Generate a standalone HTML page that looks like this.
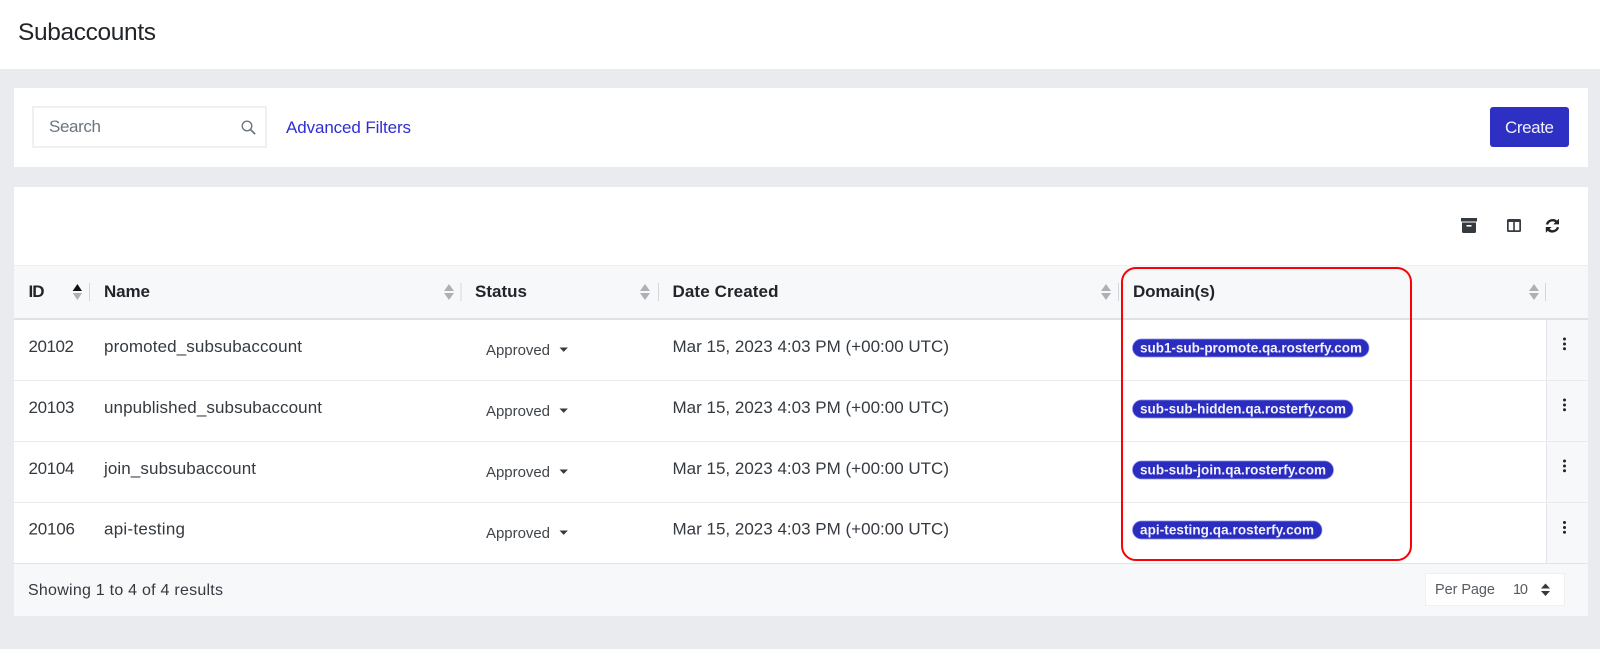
<!DOCTYPE html>
<html lang="en">
<head>
<meta charset="utf-8">
<title>Subaccounts</title>
<style>
html,body{margin:0;padding:0;background:#e9ebef;width:1600px;height:649px;overflow:hidden}
svg{display:block;filter:blur(.3px)}
text{font-family:"Liberation Sans",sans-serif;fill:#343a40;font-size:17px}
.h{font-weight:700;fill:#212529;font-size:17px}
.s{font-size:15px;fill:#3f454b}
.p{font-weight:700;font-size:13.5px;fill:#f2f2fc}
</style>
</head>
<body>
<svg width="1600" height="649" viewBox="0 0 1600 649" xmlns="http://www.w3.org/2000/svg">
<defs>
<g id="sort"><path d="M0 7L5 0L10 7Z M0 9L5 16L10 9Z" fill="#adb1b6"/></g>
<g id="dots" fill="#212529"><circle cx="0" cy="0" r="1.5"/><circle cx="0" cy="5" r="1.5"/><circle cx="0" cy="9.7" r="1.5"/></g>
<path id="caret" d="M0 0H8.4L4.2 4.4Z" fill="#343a40"/>
</defs>
<rect width="1600" height="649" fill="#e9ebef"/>
<!-- header -->
<rect width="1600" height="69" fill="#fff"/>
<text x="18" y="40" style="font-size:24.5px;fill:#212529" textLength="138">Subaccounts</text>
<!-- filter card -->
<rect x="14" y="88" width="1574" height="79" fill="#fff"/>
<rect x="33" y="107" width="233" height="40" fill="#fff" stroke="#eef0f2" stroke-width="2"/>
<text x="49" y="132" style="font-size:17px;fill:#6c757d" textLength="52">Search</text>
<circle cx="247" cy="126" r="4.8" fill="none" stroke="#6c757d" stroke-width="1.4"/>
<path d="M250.6 129.6L254.6 133.6" stroke="#6c757d" stroke-width="1.7" stroke-linecap="round"/>
<text x="286" y="133" style="font-size:17px;fill:#2e2ed2" textLength="125">Advanced Filters</text>
<rect x="1490" y="107" width="79" height="40" rx="3" fill="#2e30c4"/>
<text x="1505" y="133" style="font-size:17px;fill:#f0f0fb" textLength="49">Create</text>
<!-- table card -->
<rect x="14" y="187" width="1574" height="429" fill="#fff"/>
<!-- toolbar icons -->
<path d="M1461 218H1477V221.5H1461Z M1462 222.5H1476V231.5Q1476 233 1474.5 233H1463.5Q1462 233 1462 231.5Z" fill="#343a40"/>
<rect x="1466.5" y="225" width="5" height="1.6" fill="#fff"/>
<path fill-rule="evenodd" d="M1508.5 219H1519.5Q1521 219 1521 220.5V230.5Q1521 232 1519.5 232H1508.5Q1507 232 1507 230.5V220.5Q1507 219 1508.5 219ZM1508.7 222V230.3H1513.2V222ZM1514.8 222V230.3H1519.3V222Z" fill="#343a40"/>
<g fill="none" stroke="#212529" stroke-width="2.4">
<path d="M1547 224.5A5.8 5.8 0 0 1 1556.8 222"/>
<path d="M1558 227.2A5.8 5.8 0 0 1 1548.2 229.5"/>
</g>
<path d="M1559 218.6V224.4H1553.2Z M1545.8 232.8V227H1551.6Z" fill="#212529"/>
<!-- table header -->
<rect x="14" y="265" width="1574" height="54" fill="#f7f8fa"/>
<rect x="14" y="265" width="1574" height="1" fill="#eceef0"/>
<rect x="14" y="318" width="1574" height="2" fill="#dee2e6"/>
<text class="h" x="28.5" y="297" textLength="16">ID</text>
<path d="M72.7 291L77.4 284L82 291Z" fill="#111"/>
<path d="M72.7 293L77.4 300L82 293Z" fill="#adb1b6"/>
<rect x="89" y="283" width="1" height="18" fill="#d5d8db"/>
<text class="h" x="104" y="297" textLength="46">Name</text>
<use href="#sort" x="444" y="284"/>
<rect x="460.5" y="283" width="1" height="18" fill="#d5d8db"/>
<text class="h" x="475" y="297" textLength="52">Status</text>
<use href="#sort" x="640" y="284"/>
<rect x="658" y="283" width="1" height="18" fill="#d5d8db"/>
<text class="h" x="672.5" y="297" textLength="106">Date Created</text>
<use href="#sort" x="1101" y="284"/>
<rect x="1118" y="283" width="1" height="18" fill="#d5d8db"/>
<text class="h" x="1133" y="297" textLength="82">Domain(s)</text>
<use href="#sort" x="1529" y="284"/>
<rect x="1545" y="283" width="1" height="18" fill="#d5d8db"/>
<!-- action column -->
<rect x="1546.5" y="320" width="41.5" height="243" fill="#f7f8fa"/>
<rect x="1546" y="320" width="1" height="243" fill="#e3e5e8"/>
<!-- row lines -->
<rect x="14" y="380" width="1574" height="1" fill="#e9ebee"/>
<rect x="14" y="441" width="1574" height="1" fill="#e9ebee"/>
<rect x="14" y="502" width="1574" height="1" fill="#e9ebee"/>
<rect x="14" y="563" width="1574" height="1" fill="#e1e3e6"/>
<!-- row 1 -->
<text x="28.5" y="352" textLength="45.5">20102</text>
<text x="104" y="352" textLength="198">promoted_subsubaccount</text>
<text class="s" x="486" y="355" textLength="64">Approved</text>
<use href="#caret" x="559.5" y="347.5"/>
<text x="672.5" y="352" textLength="276.5">Mar 15, 2023 4:03 PM (+00:00 UTC)</text>
<rect x="1132.5" y="339" width="236.5" height="18" rx="9" fill="#2b2cc0" stroke="#8d8ee0" stroke-width=".7"/>
<text class="p" x="1140" y="352.5" textLength="222">sub1-sub-promote.qa.rosterfy.com</text>
<use href="#dots" x="1564.5" y="339"/>
<!-- row 2 -->
<text x="28.5" y="413" textLength="46">20103</text>
<text x="104" y="413" textLength="218">unpublished_subsubaccount</text>
<text class="s" x="486" y="416" textLength="64">Approved</text>
<use href="#caret" x="559.5" y="408.5"/>
<text x="672.5" y="413" textLength="276.5">Mar 15, 2023 4:03 PM (+00:00 UTC)</text>
<rect x="1132.5" y="400" width="220.5" height="18" rx="9" fill="#2b2cc0" stroke="#8d8ee0" stroke-width=".7"/>
<text class="p" x="1140" y="413.5" textLength="206">sub-sub-hidden.qa.rosterfy.com</text>
<use href="#dots" x="1564.5" y="400"/>
<!-- row 3 -->
<text x="28.5" y="474" textLength="46">20104</text>
<text x="104" y="474" textLength="152">join_subsubaccount</text>
<text class="s" x="486" y="477" textLength="64">Approved</text>
<use href="#caret" x="559.5" y="469.5"/>
<text x="672.5" y="474" textLength="276.5">Mar 15, 2023 4:03 PM (+00:00 UTC)</text>
<rect x="1132.5" y="461" width="201" height="18" rx="9" fill="#2b2cc0" stroke="#8d8ee0" stroke-width=".7"/>
<text class="p" x="1140" y="474.5" textLength="186">sub-sub-join.qa.rosterfy.com</text>
<use href="#dots" x="1564.5" y="461"/>
<!-- row 4 -->
<text x="28.5" y="534.5" textLength="46.5">20106</text>
<text x="104" y="534.5" textLength="81">api-testing</text>
<text class="s" x="486" y="538" textLength="64">Approved</text>
<use href="#caret" x="559.5" y="530.5"/>
<text x="672.5" y="534.5" textLength="276.5">Mar 15, 2023 4:03 PM (+00:00 UTC)</text>
<rect x="1132.5" y="521" width="189.5" height="18" rx="9" fill="#2b2cc0" stroke="#8d8ee0" stroke-width=".7"/>
<text class="p" x="1140" y="534.5" textLength="174">api-testing.qa.rosterfy.com</text>
<use href="#dots" x="1564.5" y="522.5"/>
<!-- footer -->
<rect x="14" y="564" width="1574" height="52" fill="#f7f8fa"/>
<text x="28" y="595" style="font-size:16px" textLength="195">Showing 1 to 4 of 4 results</text>
<rect x="1425.5" y="573.5" width="139" height="32" fill="#fff" stroke="#eef0f2"/>
<text x="1435" y="594" style="font-size:14.5px;fill:#555b61" textLength="60">Per Page</text>
<text x="1513" y="594" style="font-size:14.5px;fill:#555b61" textLength="15">10</text>
<path d="M1541 588.5L1545.5 583.5L1550 588.5Z M1541 591L1545.5 596L1550 591Z" fill="#343a40"/>
<!-- annotation -->
<rect x="1122" y="268" width="289" height="292" rx="14" fill="none" stroke="#fb0007" stroke-width="2"/>
</svg>
</body>
</html>
